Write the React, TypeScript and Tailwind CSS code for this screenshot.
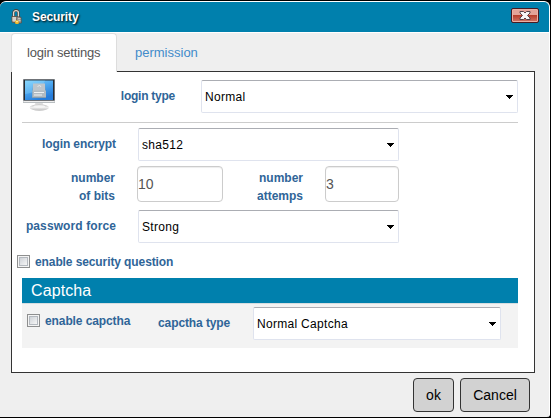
import React from "react";

function Select({ value, className }: { value: string; className: string }) {
  return (
    <button
      type="button"
      className={`flex h-[33px] items-center justify-between rounded-[2px] border border-[#dfe3ee] border-t-[#abadb3] bg-white pr-[4px] pl-[3px] text-left text-[12px] text-black ${className}`}
    >
      <span className="tracking-[0.3px] whitespace-nowrap">{value}</span>
      <svg width="7" height="4" viewBox="0 0 7 4" shapeRendering="crispEdges" className="mt-px">
        <path d="M0 0H7V1H0ZM1 1H6V2H1ZM2 2H5V3H2ZM3 3H4V4H3Z" fill="#000" />
      </svg>
    </button>
  );
}

function Checkbox() {
  return (
    <span className="flex h-[13px] w-[13px] shrink-0 items-center justify-center border border-[#8e8f8f] bg-[#f4f4f4]">
      <span className="h-[9px] w-[9px] border border-[#b4b9bf] bg-linear-to-br from-[#cfd3d8] to-[#f6f6f6]" />
    </span>
  );
}

function Label({ children, className = "tracking-[-0.1px]" }: { children: React.ReactNode; className?: string }) {
  return (
    <span className={`whitespace-nowrap text-[12px] leading-[18px] font-bold text-[#2f6598] ${className}`}>
      {children}
    </span>
  );
}

function Padlocks() {
  return (
    <svg width="11" height="16" viewBox="0 0 11 16">
      <path d="M2.6 8V3.8C2.6 .5 7.4 .5 7.4 3.8V8" fill="none" stroke="#4a3f38" strokeWidth="2.6" />
      <path d="M2.6 8V3.8C2.6 1 7.4 1 7.4 3.8V8" fill="none" stroke="#dedbd4" strokeWidth="1.3" />
      <path d="M.8 7.5H6.5V14L1 13.2Z" fill="#b9b4ab" stroke="#5c4a3d" strokeWidth=".8" />
      <path d="M1.5 9H6M1.5 11H5" stroke="#f1eee7" />
      <path d="M5.8 7.5L10 8.3L10.4 14H5.5Z" fill="#a29e97" stroke="#564d46" strokeWidth=".8" />
      <path d="M7 9.5H9.5M7.5 11.5H9.5" stroke="#d4d0c9" strokeWidth=".8" />
      <path d="M3.8 12.5L5.5 11L8 12.3L7.5 15H4.5Z" fill="#edb52a" />
      <path d="M5 12.7h2" stroke="#fff0a0" />
    </svg>
  );
}

function Monitor() {
  return (
    <svg width="34" height="34" viewBox="0 0 34 34">
      <defs>
        <linearGradient id="screen" x1="0" y1="0" x2="0.5" y2="1">
          <stop offset="0" stopColor="#7fd2fb" />
          <stop offset="0.5" stopColor="#4ba6ef" />
          <stop offset="1" stopColor="#267cda" />
        </linearGradient>
        <linearGradient id="stand" x1="0" y1="0" x2="0" y2="1">
          <stop offset="0" stopColor="#c0c0c0" />
          <stop offset="0.5" stopColor="#eeeeee" />
          <stop offset="1" stopColor="#bababa" />
        </linearGradient>
      </defs>
      <path d="M13.5 24H20.5L21.5 29H12.5Z" fill="url(#stand)" />
      <ellipse cx="17.3" cy="29.5" rx="9.7" ry="3.2" fill="url(#stand)" />
      <ellipse cx="17.3" cy="28.5" rx="6" ry="1.3" fill="#f5f5f5" />
      <path d="M1 1H33V25H1Z" fill="#b8bdc0" />
      <path d="M1.5 1.5H32.5V22.5H1.5Z" fill="#272b31" />
      <path d="M3 2.5H31V22H3Z" fill="url(#screen)" />
      <path d="M3 2.5H23C21 10 12 15 3 16Z" fill="#9fe0ff" opacity=".3" />
      <path d="M11 6H23L24 20H10Z" fill="#879eb0" />
      <path d="M11 5.5H23V13H11Z" fill="#bdc5cb" />
      <path d="M10.5 12.5H24V19H10.5Z" fill="#b2bbc2" />
      <path d="M12 14.5H22M12 17H20" stroke="#eef1f2" />
      <path d="M15.5 9L17.5 7L19 9" fill="none" stroke="#e2e6e9" />
      <path d="M1.5 23.5H32.5" stroke="#eeeeee" />
    </svg>
  );
}

function CloseButton() {
  return (
    <button
      type="button"
      aria-label="Close"
      className="flex h-[15px] w-[28px] items-center justify-center rounded-[2px] border border-[#481a22] bg-linear-to-b from-[#e3a399] from-45% via-[#b73e2c] via-50% to-[#cf7466] shadow-[inset_0_0_0_1px_#eab0a5]"
    >
      <svg width="12" height="9" viewBox="0 0 12 9">
        <path d="M1 .5H4.5L6 2L7.5 .5H11V2L8.5 4.5L11 7V8.5H7.5L6 7L4.5 8.5H1V7L3.5 4.5L1 2Z" fill="#f6f6f6" stroke="#554449" />
      </svg>
    </button>
  );
}

export default function App() {
  return (
    <div className="h-[418px] w-[551px] overflow-hidden bg-black pt-px pr-px pb-px font-['Liberation_Sans',Arial,sans-serif]">
      <div className="flex h-[416px] flex-col overflow-hidden rounded-t-[6px] rounded-br-[3px] border-t border-r border-white bg-[#efefef]">
        <header className="flex h-[31px] shrink-0 items-center border-b border-white bg-[#0080ad] pr-[10px] pl-[11px]">
          <Padlocks />
          <h1 className="ml-[10px] text-[12px] font-bold tracking-[-0.1px] text-white [text-shadow:1px_1px_2px_#000]">Security</h1>
          <div className="ml-auto pb-[3px]">
            <CloseButton />
          </div>
        </header>
        <nav className="relative z-10 flex h-[39px] shrink-0 pl-[11px] text-[13px]">
          <div className="h-[39px] w-[106px] rounded-t-[4px] border border-b-0 border-[#dddddd] bg-white pt-[9px] pl-[15px] leading-[19px] tracking-[-0.18px] text-[#555555]">login settings</div>
          <div className="pt-[10px] pl-[18px] leading-[19px] text-[#428bca]">permission</div>
        </nav>
        <main className="-mt-px ml-[11px] flex h-[302px] w-[524px] shrink-0 flex-col border border-[#333333] bg-white">
          <section className="ml-[10px] flex h-[51px] w-[496px] shrink-0 border-b border-[#cccccc] pt-[8px]">
            <div className="-mt-[2px] w-[34px]">
              <Monitor />
            </div>
            <Label className="w-[119px] pt-[7px] text-right tracking-[-0.25px]">login type</Label>
            <Select value="Normal" className="ml-[26px] w-[317px]" />
          </section>
          <section className="flex h-[38px] shrink-0 pt-[5px]">
            <Label className="w-[104px] pt-[7px] text-right tracking-[-0.1px]">login encrypt</Label>
            <Select value="sha512" className="ml-[22px] w-[261px]" />
          </section>
          <section className="flex h-[44px] shrink-0 pt-[5px]">
            <Label className="w-[103px] pt-[3px] text-right">number<br />of bits</Label>
            <div className="ml-[22px] flex h-[36px] w-[86px] items-center rounded-[4px] border border-[#cccccc] text-[14px] text-[#555555] shadow-[inset_0_1px_1px_#00000013]">10</div>
            <Label className="w-[80px] pt-[3px] text-right">number<br />attemps</Label>
            <div className="ml-[22px] flex h-[36px] w-[74px] items-center rounded-[4px] border border-[#cccccc] text-[14px] text-[#555555] shadow-[inset_0_1px_1px_#00000013]">3</div>
          </section>
          <section className="flex h-[44px] shrink-0 pt-[5px]">
            <Label className="w-[104px] pt-[7px] text-right tracking-[0.1px]">password force</Label>
            <Select value="Strong" className="ml-[22px] w-[261px]" />
          </section>
          <section className="flex h-[29px] shrink-0 items-center gap-[5px] pb-[4px] pl-[5px]">
            <Checkbox />
            <Label>enable security question</Label>
          </section>
          <section className="ml-[10px] h-[70px] w-[496px] shrink-0 bg-[#f3f3f3]">
            <h2 className="h-[26px] border-b border-[#d5dde0] bg-[#0080ad] pl-[9px] text-[16px] leading-[25px] tracking-[0.1px] text-white">Captcha</h2>
            <div className="flex pt-[3px] pl-[5px]">
              <div className="flex h-[27px] w-[131px] items-center gap-[5px]">
                <Checkbox />
                <Label>enable capctha</Label>
              </div>
              <Label className="w-[95px] pt-[7px] tracking-[-0.1px]">capctha type</Label>
              <Select value="Normal Captcha" className="w-[248px]" />
            </div>
          </section>
        </main>
        <footer className="flex gap-[6px] pt-[5px] pl-[413px] text-[14px] text-black">
          <button type="button" className="h-[34px] w-[41px] rounded-[4px] border border-[#333333] bg-[#d2d2d2]">ok</button>
          <button type="button" className="h-[34px] w-[70px] rounded-[4px] border border-[#333333] bg-[#d2d2d2]">Cancel</button>
        </footer>
      </div>
    </div>
  );
}
